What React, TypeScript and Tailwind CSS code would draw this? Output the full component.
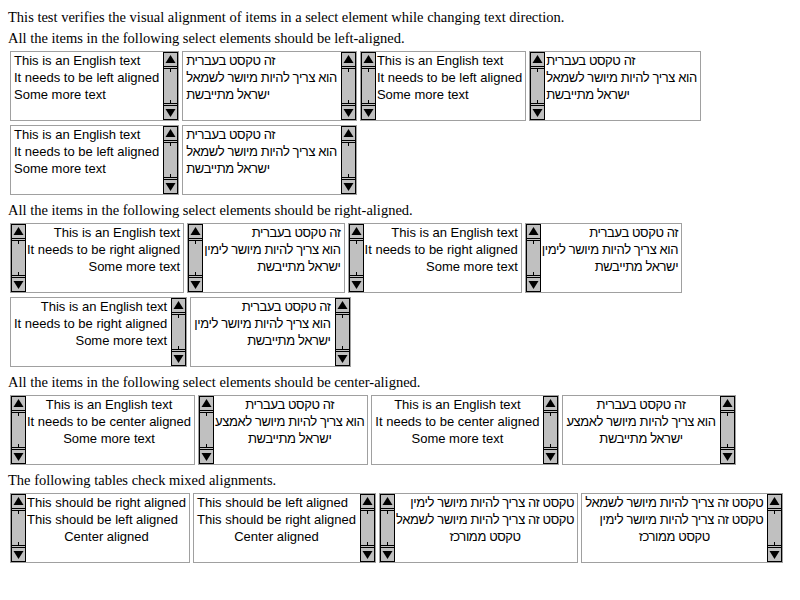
import React from 'react';

type Align = 'left' | 'right' | 'center';
type Item = { t: string; a: Align; he?: boolean };

const alignCls: Record<Align, string> = {
  left: 'text-left',
  right: 'text-right',
  center: 'text-center',
};

function Scrollbar() {
  return (
    <svg width="15" height="68" viewBox="0 0 15 68" className="block shrink-0">
      <rect x="0" y="0" width="15" height="68" fill="#c0c0c0" />
      <rect x="0.5" y="0.5" width="14" height="67" fill="none" stroke="#000" />
      <line x1="0" y1="14.5" x2="15" y2="14.5" stroke="#000" />
      <polygon points="7.5,3 2.5,11 12.5,11" fill="#000" />
      <line x1="1" y1="16.5" x2="14" y2="16.5" stroke="#000" />
      <rect x="7" y="16" width="1" height="4" fill="#000" />
      <line x1="1" y1="51.5" x2="14" y2="51.5" stroke="#000" />
      <rect x="7" y="48" width="1" height="4" fill="#000" />
      <line x1="0" y1="53.5" x2="15" y2="53.5" stroke="#000" />
      <polygon points="2.5,57 12.5,57 7.5,65" fill="#000" />
    </svg>
  );
}

function ListBox({ items, side }: { items: Item[]; side: 'left' | 'right' }) {
  return (
    <div className="flex h-[70px] border border-[#a0a0a0] bg-white">
      {side === 'left' && (
        <div className="pr-[1px]">
          <Scrollbar />
        </div>
      )}
      <div className={side === 'left' ? 'flex flex-col pr-[3px]' : 'flex flex-col pl-[3px] pr-[4px]'}>
        {items.map((it, i) => (
          <div
            key={i}
            dir={it.he ? 'rtl' : 'ltr'}
            className={
              'h-[17px] leading-[17px] whitespace-nowrap ' +
              alignCls[it.a] +
              (it.he ? ' tracking-[-0.4px]' : '')
            }
          >
            {it.t}
          </div>
        ))}
      </div>
      {side === 'right' && <Scrollbar />}
    </div>
  );
}

const en = (a: Align, mid: string): Item[] => [
  { t: 'This is an English text', a },
  { t: mid, a },
  { t: 'Some more text', a },
];
const he = (a: Align, mid: string): Item[] => [
  { t: 'זה טקסט בעברית', a, he: true },
  { t: mid, a, he: true },
  { t: 'ישראל מתייבשת', a, he: true },
];

function Row({ children }: { children: React.ReactNode }) {
  return (
    <div
      className="flex flex-wrap gap-x-[3px] gap-y-[4px] pl-[10px] text-[13px]"
      style={{ fontFamily: '"Liberation Sans", Arial, sans-serif' }}
    >
      {children}
    </div>
  );
}

function Heading({ children, className = '' }: { children: React.ReactNode; className?: string }) {
  return (
    <div className={'h-[16px] leading-[16px] pl-[8px] whitespace-nowrap text-[14.5px] ' + className}>{children}</div>
  );
}

export default function App() {
  const leftEn = en('left', 'It needs to be left aligned');
  const leftHe = he('left', 'הוא צריך להיות מיושר לשמאל');
  const rightEn = en('right', 'It needs to be right aligned');
  const rightHe = he('right', 'הוא צריך להיות מיושר לימין');
  const cEn = en('center', 'It needs to be center aligned');
  const cHe = he('center', 'הוא צריך להיות מיושר לאמצע');
  return (
    <div
      className="w-[800px] h-[600px] bg-white text-black pt-[9px]"
      style={{ fontFamily: '"Liberation Serif", serif' }}
    >
      <Heading>This test verifies the visual alignment of items in a select element while changing text direction.</Heading>
      <Heading className="mt-[5px]">All the items in the following select elements should be left-aligned.</Heading>
      <div className="mt-[5px]">
        <Row>
          <ListBox items={leftEn} side="right" />
          <ListBox items={leftHe} side="right" />
          <ListBox items={leftEn} side="left" />
          <ListBox items={leftHe} side="left" />
          <ListBox items={leftEn} side="right" />
          <ListBox items={leftHe} side="right" />
        </Row>
      </div>
      <Heading className="mt-[7px]">All the items in the following select elements should be right-aligned.</Heading>
      <div className="mt-[5px]">
        <Row>
          <ListBox items={rightEn} side="left" />
          <ListBox items={rightHe} side="left" />
          <ListBox items={rightEn} side="left" />
          <ListBox items={rightHe} side="left" />
          <ListBox items={rightEn} side="right" />
          <ListBox items={rightHe} side="right" />
        </Row>
      </div>
      <Heading className="mt-[7px]">All the items in the following select elements should be center-aligned.</Heading>
      <div className="mt-[5px]">
        <Row>
          <ListBox items={cEn} side="left" />
          <ListBox items={cHe} side="left" />
          <ListBox items={cEn} side="right" />
          <ListBox items={cHe} side="right" />
        </Row>
      </div>
      <Heading className="mt-[7px]">The following tables check mixed alignments.</Heading>
      <div className="mt-[5px]">
        <Row>
          <ListBox
            side="left"
            items={[
              { t: 'This should be right aligned', a: 'right' },
              { t: 'This should be left aligned', a: 'left' },
              { t: 'Center aligned', a: 'center' },
            ]}
          />
          <ListBox
            side="right"
            items={[
              { t: 'This should be left aligned', a: 'left' },
              { t: 'This should be right aligned', a: 'right' },
              { t: 'Center aligned', a: 'center' },
            ]}
          />
          <ListBox
            side="left"
            items={[
              { t: 'טקסט זה צריך להיות מיושר לימין', a: 'right', he: true },
              { t: 'טקסט זה צריך להיות מיושר לשמאל', a: 'left', he: true },
              { t: 'טקסט ממורכז', a: 'center', he: true },
            ]}
          />
          <ListBox
            side="right"
            items={[
              { t: 'טקסט זה צריך להיות מיושר לשמאל', a: 'left', he: true },
              { t: 'טקסט זה צריך להיות מיושר לימין', a: 'right', he: true },
              { t: 'טקסט ממורכז', a: 'center', he: true },
            ]}
          />
        </Row>
      </div>
    </div>
  );
}
